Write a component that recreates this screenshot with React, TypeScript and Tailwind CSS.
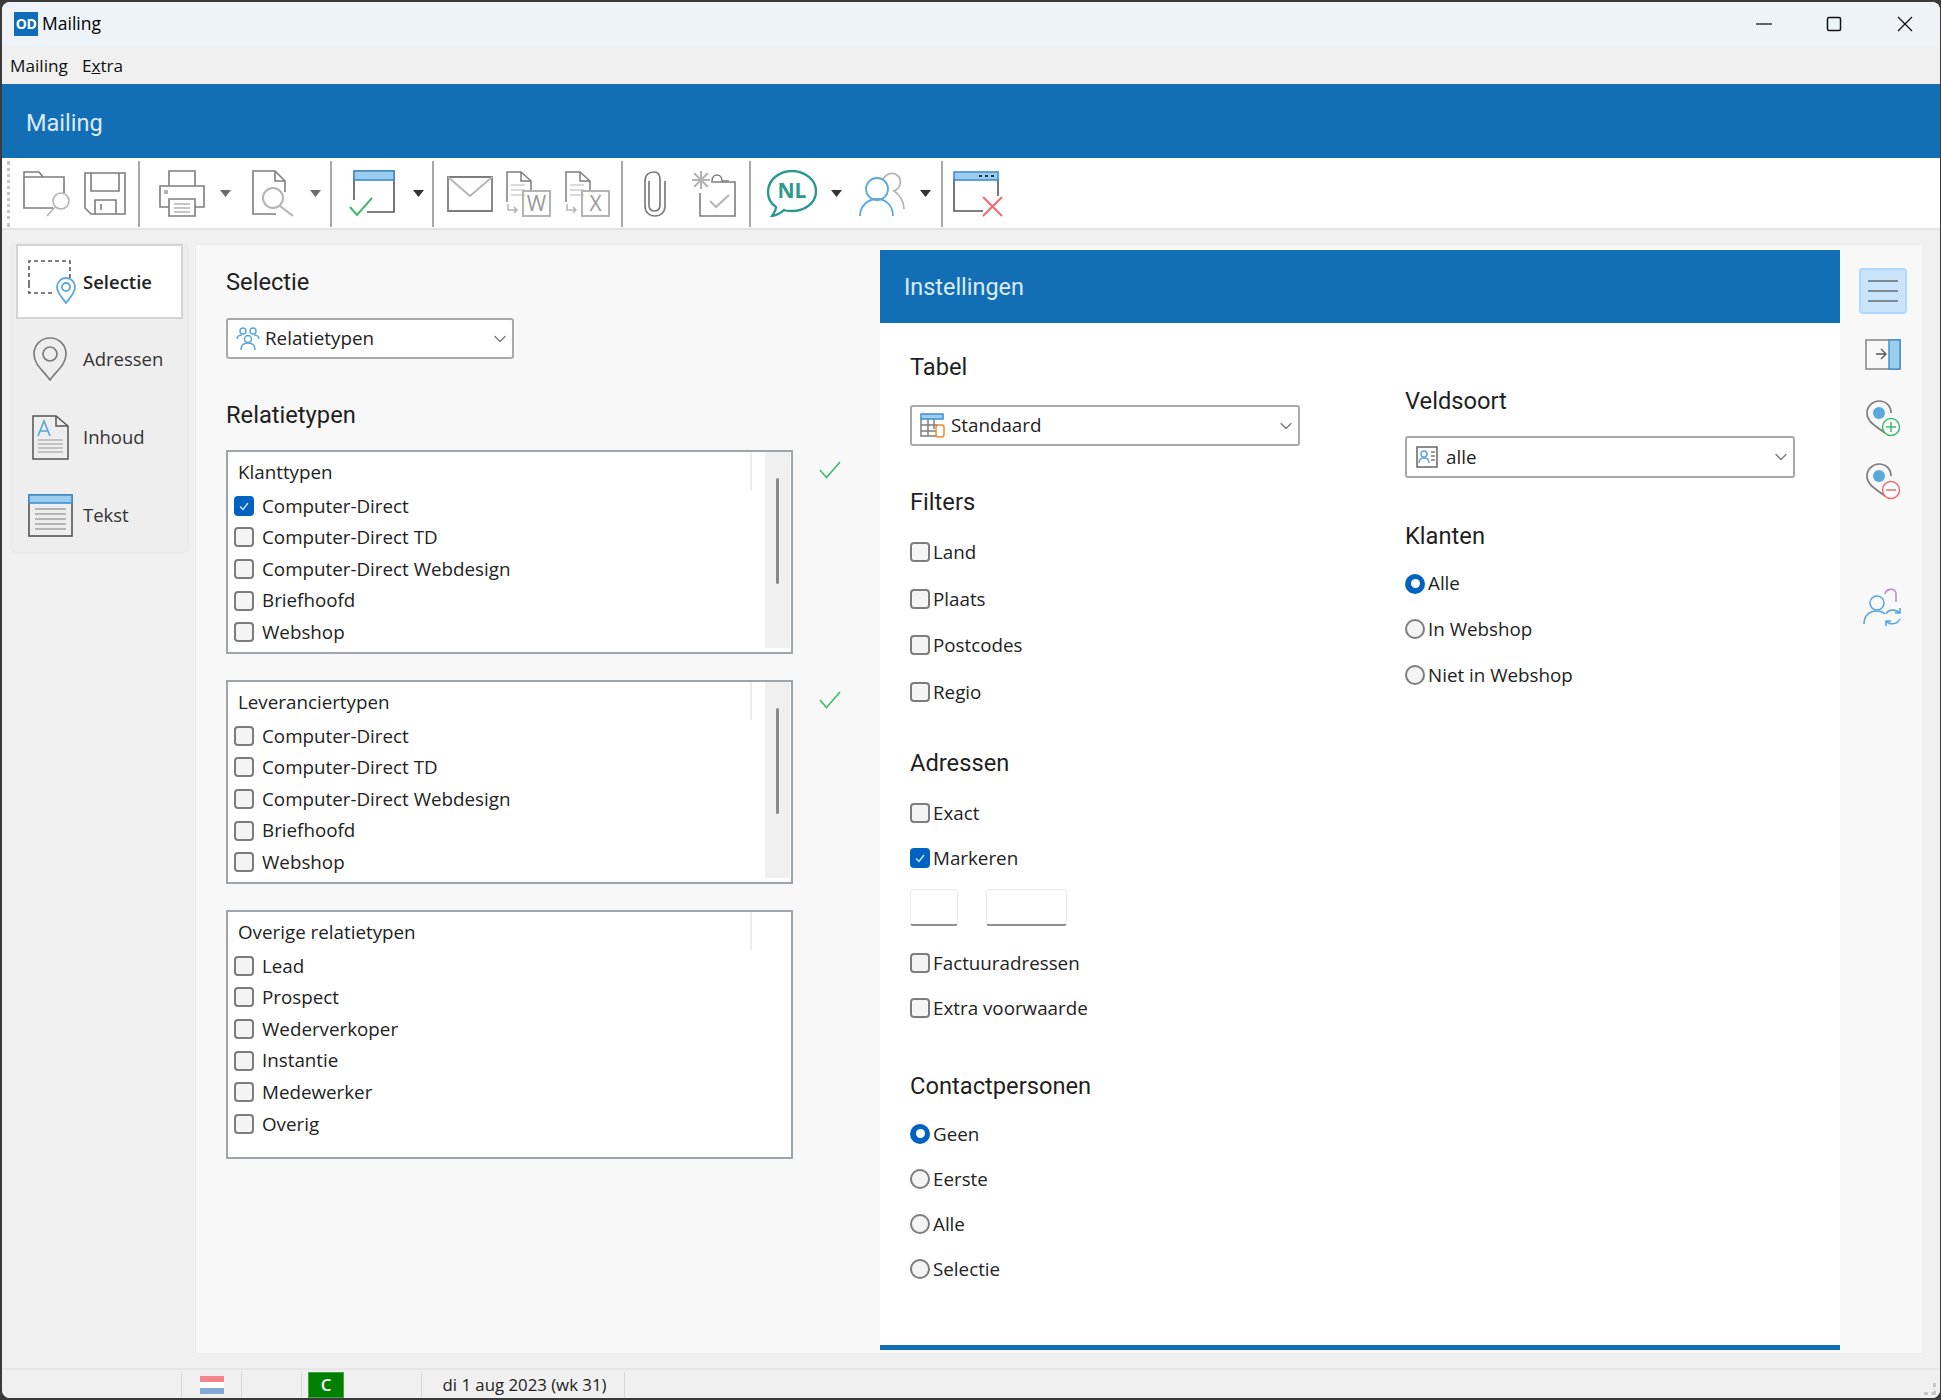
import { ChevronDown } from "lucide-react"

const GRAY = "#7d7d7d"
const LIGHT = "#b4b4b4"
const BLUE = "#5ba8dc"
const SKY = "#9ccdee"
const GREEN = "#3dbb6c"
const RED = "#f2686e"

function Heading({ children }: { children: string }) {
  return <div className="h-[30px] pt-[2px] flex items-center font-['Roboto',sans-serif] text-[23.7px] text-[#1f1f1f]">{children}</div>
}

function Dropdown({ icon, label, className }: { icon: React.ReactNode; label: string; className: string }) {
  return (
    <div className={`flex items-center bg-white border-2 border-[#a9a9a9] rounded-[3px] pl-2 pr-[2px] ${className}`}>
      {icon}
      <span className="ml-[5px] flex-1 text-[#222]">{label}</span>
      <ChevronDown className="w-[20px] h-[20px] text-[#777]" strokeWidth={1.5} />
    </div>
  )
}

function Check({ on, label }: { on?: boolean; label: string }) {
  return (
    <div className="flex items-center h-full">
      {on ? (
        <span className="w-[20px] h-[20px] rounded-[4px] bg-[#0063c1] flex items-center justify-center">
          <svg width="12" height="12" viewBox="0 0 12 12"><path d="M2 6.5 5 9.5 10 3" fill="none" stroke="#cfe3f5" strokeWidth="1.4" /></svg>
        </span>
      ) : (
        <span className="w-[20px] h-[20px] rounded-[4px] bg-[#f4f4f4] border-2 border-[#7c7c7c]" />
      )}
      <span className="ml-[3px] text-[#222]">{label}</span>
    </div>
  )
}

function Radio({ on, label }: { on?: boolean; label: string }) {
  return (
    <div className="flex items-center h-[45px]">
      {on ? (
        <span className="w-[20px] h-[20px] rounded-full bg-[#0063c1] flex items-center justify-center">
          <span className="w-[9px] h-[9px] rounded-full bg-white" />
        </span>
      ) : (
        <span className="w-[20px] h-[20px] rounded-full bg-[#f4f4f4] border-2 border-[#7c7c7c]" />
      )}
      <span className="ml-[3px] text-[#222]">{label}</span>
    </div>
  )
}

function ListBox({ title, items, checked, thumb, className }: { title: string; items: string[]; checked?: string; thumb?: string; className: string }) {
  return (
    <div className={`flex w-[567px] bg-white border-2 border-[#9ea4aa] ${className}`}>
      <div className="w-[537px]">
        <div className="w-[524px] h-[38px] flex items-center pl-[10px] pt-[2px] border-r-2 border-[#eeeeee] text-[#222]">{title}</div>
        {items.map((item) => (
          <div key={item} className="h-[31.6px] pl-[6px] [&_span:last-child]:ml-[8px]">
            <Check label={item} on={item === checked} />
          </div>
        ))}
      </div>
      {thumb && (
        <div className="w-[25px] bg-[#f0f0f0] flex justify-center pt-[26px] mb-[4px]">
          <div className={`w-[3px] bg-[#8a8a8a] rounded-full ${thumb}`} />
        </div>
      )}
    </div>
  )
}

function Arrow({ dark, className }: { dark?: boolean; className: string }) {
  return (
    <svg width="11" height="7" viewBox="0 0 11 7" className={className}>
      <path d="M0 0H11L5.5 7Z" fill={dark ? "#333" : "#6b6b6b"} />
    </svg>
  )
}

function Sep({ className }: { className: string }) {
  return <div className={`w-[2px] h-[66px] bg-[#a8a8a8] ${className}`} />
}

function GreenCheck({ className }: { className: string }) {
  return (
    <svg width="22" height="18" viewBox="0 0 22 18" className={className}>
      <path d="M1 9 7.5 16.5 21 1" fill="none" stroke={GREEN} strokeWidth="1.6" />
    </svg>
  )
}

function DocBadge({ letter, className }: { letter: string; className: string }) {
  return (
    <svg width="46" height="46" viewBox="0 0 46 46" className={className} fill="none" stroke={GRAY} strokeWidth="1.5">
      <path d="M2 31V1H16L26 10V20" />
      <path d="M16 1V10H26" />
      <path d="M6 14H20M6 19H20M6 24H20" stroke="#d0d0d0" />
      <path d="M3 33V39H12M9 36 12 39 9 42" stroke={LIGHT} />
      <rect x="18" y="20" width="27" height="25" stroke={LIGHT} strokeWidth="2" />
      <text x="31.5" y="40" textAnchor="middle" fontSize="21" fill="#9a9a9a" stroke="none" fontFamily="Open Sans, sans-serif">{letter}</text>
    </svg>
  )
}

function Toolbar() {
  return (
    <div className="h-[72px] bg-white border-b-2 border-[#e3e3e3] flex items-center pl-[5px] pt-[1px] shrink-0">
      <div className="w-[3px] h-[66px] border-l-[3px] border-dotted border-[#c4c4c4]" />
      <svg width="48" height="47" viewBox="0 0 48 47" className="ml-[13px]" fill="none" stroke={GRAY} strokeWidth="1.6">
        <path d="M30 38H1V2H16L20 7H41V23" />
        <path d="M1 7H20" />
        <circle cx="38" cy="31" r="8" stroke={LIGHT} />
        <path d="M32 37 24 46" stroke={LIGHT} />
      </svg>
      <svg width="42" height="44" viewBox="0 0 42 44" className="ml-[13px]" fill="none" stroke={GRAY} strokeWidth="1.6">
        <path d="M1 1H41V42H7L1 36Z" />
        <path d="M7 1V19H35V1" />
        <path d="M11 42V28H32V42" />
        <path d="M17 32V38" />
      </svg>
      <Sep className="ml-[12px]" />
      <svg width="46" height="47" viewBox="0 0 46 47" className="ml-[19px]" fill="none" stroke={GRAY} strokeWidth="1.6">
        <path d="M10 16V1H36V16" />
        <path d="M10 37H1V16H45V37H36" />
        <path d="M10 29H36V46H10Z" />
        <path d="M15 34H31M15 38H31M15 42H31" stroke={LIGHT} />
        <rect x="5" y="20" width="4" height="4" fill={LIGHT} stroke="none" />
      </svg>
      <Arrow className="ml-[15px]" />
      <svg width="43" height="47" viewBox="0 0 43 47" className="ml-[21px]" fill="none" stroke={GRAY} strokeWidth="1.6">
        <path d="M24 44H1V1H23L33 11V22" />
        <path d="M23 1V11H33" />
        <circle cx="21" cy="28" r="10" stroke={LIGHT} strokeWidth="2" />
        <path d="M28 36 41 46" stroke={LIGHT} strokeWidth="2" />
      </svg>
      <Arrow className="ml-[15px]" />
      <Sep className="ml-[9px]" />
      <svg width="50" height="47" viewBox="0 0 50 47" className="ml-[17px]" fill="none">
        <path d="M5 1H45V42H18M5 30V1" stroke="#555" strokeWidth="1.6" />
        <rect x="5" y="1" width="40" height="9" fill={SKY} stroke="#3c8fcf" strokeWidth="1.6" />
        <path d="M1 37 8 45 23 28" stroke={GREEN} strokeWidth="2" />
      </svg>
      <Arrow dark className="ml-[14px]" />
      <Sep className="ml-[8px]" />
      <svg width="46" height="36" viewBox="0 0 46 36" className="ml-[13px]" fill="none" stroke={GRAY} strokeWidth="1.8">
        <path d="M1 1H45V35H1Z" />
        <path d="M1 1 23 20 45 1" stroke={LIGHT} />
      </svg>
      <DocBadge letter="W" className="ml-[12px]" />
      <DocBadge letter="X" className="ml-[13px]" />
      <Sep className="ml-[11px]" />
      <svg width="22" height="47" viewBox="0 0 22 47" className="ml-[21px]" fill="none" stroke={GRAY} strokeWidth="1.7">
        <path d="M5 11V35C5 39 7 41 10.5 41C14 41 16 39 16 35V9C16 5 14 2 10.5 2C5 2 1 5 1 11V36C1 42 5 46 11 46C17 46 21 42 21 36V11" />
      </svg>
      <svg width="46" height="49" viewBox="0 0 46 49" className="ml-[25px]" fill="none" stroke={GRAY} strokeWidth="1.6">
        <path d="M20 13H44V47H9V24" />
        <path d="M21 12C21 4 31 4 31 12H38" />
        <path d="M19 32 25 38 38 26" stroke={LIGHT} strokeWidth="2" />
        <path d="M10 2V20M1 11H19M3 4 17 18M17 4 3 18" stroke={LIGHT} strokeWidth="2" />
      </svg>
      <Sep className="ml-[12px]" />
      <svg width="50" height="47" viewBox="0 0 50 47" className="ml-[16px]" fill="none">
        <path d="M9 37C3 33 1 28 1 22C1 10 12 1 25 1C38 1 49 10 49 21C49 33 38 41 25 41C22 41 19 41 17 40C14 43 10 45 5 46C7 43 9 40 9 37Z" stroke="#2b9a8c" strokeWidth="2.4" />
        <text x="25" y="28" textAnchor="middle" fontSize="21" fontWeight="700" fill="#2b9a8c" fontFamily="Open Sans, sans-serif">NL</text>
      </svg>
      <Arrow dark className="ml-[14px]" />
      <svg width="46" height="46" viewBox="0 0 46 46" className="ml-[17px]" fill="none" strokeWidth="1.8">
        <path d="M24 9C26 3 34 0 39 5C43 9 42 17 35 20C40 23 45 30 45 38" stroke={LIGHT} />
        <circle cx="18" cy="18" r="11" stroke={BLUE} />
        <path d="M1 45C1 35 9 28 18 28C27 28 34 35 34 45" stroke={BLUE} />
      </svg>
      <Arrow dark className="ml-[15px]" />
      <Sep className="ml-[10px]" />
      <svg width="50" height="46" viewBox="0 0 50 46" className="ml-[10px]" fill="none">
        <path d="M1 8V40H30M45 8V25" stroke="#555" strokeWidth="1.6" />
        <rect x="1" y="1" width="44" height="8" fill={SKY} stroke="#3c8fcf" strokeWidth="1.6" />
        <path d="M26 5H29M32 5H35M38 5H41" stroke="#333" strokeWidth="2" />
        <path d="M30 26 49 45M49 26 30 45" stroke={RED} strokeWidth="2" />
      </svg>
    </div>
  )
}

function NavRail() {
  return (
    <div className="w-[175px] h-[308px] ml-[10px] bg-[#eeeeee] rounded-[4px] shadow-[0_0_2px_#d8d8d8] text-[18.5px]">
      <div className="mx-[4px] mb-[1px] h-[75px] bg-white border-2 border-[#d4d4d4] flex items-center pl-[10px]">
        <svg width="48" height="44" viewBox="0 0 48 44" fill="none">
          <path d="M1 24V1H42V20M1 24V33H27" stroke="#555" strokeWidth="1.6" strokeDasharray="4 3" />
          <path d="M38 43C33 36 29 33 29 27C29 22 33 18 38 18C43 18 47 22 47 27C47 33 43 36 38 43Z" stroke={BLUE} strokeWidth="1.8" fill="#fff" />
          <circle cx="38" cy="27" r="4" stroke={BLUE} strokeWidth="1.8" />
        </svg>
        <span className="ml-[7px] font-semibold text-[#222]">Selectie</span>
      </div>
      <div className="h-[78px] flex items-center">
        <svg width="34" height="44" viewBox="0 0 34 44" fill="none" stroke={GRAY} strokeWidth="1.7" className="ml-[21px]">
          <path d="M17 43C11 34 1 28 1 17C1 8 8 1 17 1C26 1 33 8 33 17C33 28 23 34 17 43Z" />
          <circle cx="17" cy="17" r="7" />
        </svg>
        <span className="ml-[16px] text-[#333]">Adressen</span>
      </div>
      <div className="h-[78px] flex items-center">
        <svg width="37" height="45" viewBox="0 0 37 45" fill="none" stroke="#555" strokeWidth="1.5" className="ml-[20px]">
          <path d="M1 1H24L36 11V44H1Z" />
          <path d="M24 1V11H36" />
          <path d="M6 21 12 6 18 21M8 16H16" stroke={BLUE} strokeWidth="1.7" />
          <path d="M6 25H31M6 29H31M6 33H31M6 37H31" stroke={LIGHT} />
        </svg>
        <span className="ml-[14px] text-[#333]">Inhoud</span>
      </div>
      <div className="h-[76px] flex items-center pt-[2px]">
        <svg width="45" height="43" viewBox="0 0 45 43" fill="none" className="ml-[16px]">
          <rect x="1" y="1" width="43" height="41" stroke="#555" strokeWidth="1.6" />
          <rect x="1" y="1" width="43" height="8" fill={SKY} stroke="#3c8fcf" strokeWidth="1.6" />
          <path d="M7 15H38M7 20H38M7 25H38M7 30H38M7 35H38" stroke={GRAY} />
        </svg>
        <span className="ml-[10px] text-[#333]">Tekst</span>
      </div>
    </div>
  )
}

function SelectionPane() {
  return (
    <div className="w-[684px] pl-[30px] pt-[22px] shrink-0">
      <Heading>Selectie</Heading>
      <Dropdown
        className="mt-[21px] w-[288px] h-[41px]"
        label="Relatietypen"
        icon={
          <svg width="24" height="25" viewBox="0 0 24 25" fill="none" stroke={BLUE} strokeWidth="1.5">
            <circle cx="7" cy="5" r="3" />
            <circle cx="17" cy="5" r="3" />
            <path d="M1 13C1 10 4 9 6 9M23 13C23 10 20 9 18 9" />
            <circle cx="12" cy="13" r="3.5" />
            <path d="M5 24C5 19 8 17 12 17C16 17 19 19 19 24" />
          </svg>
        }
      />
      <div className="mt-[41px]"><Heading>Relatietypen</Heading></div>
      <div className="flex mt-[20px]">
        <ListBox title="Klanttypen" items={["Computer-Direct", "Computer-Direct TD", "Computer-Direct Webdesign", "Briefhoofd", "Webshop"]} checked="Computer-Direct" thumb="h-[106px]" className="h-[204px]" />
        <GreenCheck className="ml-[26px] mt-[11px]" />
      </div>
      <div className="flex mt-[26px]">
        <ListBox title="Leveranciertypen" items={["Computer-Direct", "Computer-Direct TD", "Computer-Direct Webdesign", "Briefhoofd", "Webshop"]} thumb="h-[106px]" className="h-[204px]" />
        <GreenCheck className="ml-[26px] mt-[11px]" />
      </div>
      <div className="mt-[26px]">
        <ListBox title="Overige relatietypen" items={["Lead", "Prospect", "Wederverkoper", "Instantie", "Medewerker", "Overig"]} className="h-[249px]" />
      </div>
    </div>
  )
}

function SettingsPane() {
  return (
    <div className="w-[960px] shrink-0 mt-[5px] mb-[3px] bg-white border-b-[5px] border-[#126fb6] flex flex-col">
      <div className="h-[73px] bg-[#126fb6] flex items-center pl-[24px] pt-[3px] font-['Roboto',sans-serif] text-[23.4px] text-[#dcebf7]">Instellingen</div>
      <div className="flex flex-1">
        <div className="w-[525px] pl-[30px] pt-[29px]">
          <Heading>Tabel</Heading>
          <Dropdown
            className="mt-[23px] w-[390px] h-[41px]"
            label="Standaard"
            icon={
              <svg width="26" height="25" viewBox="0 0 26 25" fill="none" strokeWidth="1.5">
                <path d="M1 6V23H18M8 6V23M1 12H18M1 18H16M14 6V16" stroke={GRAY} />
                <rect x="1" y="1" width="22" height="5" fill={SKY} stroke="#3c8fcf" />
                <rect x="16" y="12" width="8" height="12" rx="2.5" fill="#fff" stroke="#f08a3c" />
              </svg>
            }
          />
          <div className="mt-[41px]"><Heading>Filters</Heading></div>
          <div className="mt-[12px]">
            {["Land", "Plaats", "Postcodes", "Regio"].map((label) => (
              <div key={label} className="h-[46.6px]"><Check label={label} /></div>
            ))}
          </div>
          <div className="mt-[32px]"><Heading>Adressen</Heading></div>
          <div className="mt-[13px] h-[45px]"><Check label="Exact" /></div>
          <div className="h-[45px]"><Check on label="Markeren" /></div>
          <div className="flex mt-[9px] gap-[28px]">
            <div className="w-[48px] h-[37px] bg-white border border-[#ececec] border-b-2 border-b-[#8f8f8f] rounded-[3px]" />
            <div className="w-[81px] h-[37px] bg-white border border-[#ececec] border-b-2 border-b-[#8f8f8f] rounded-[3px]" />
          </div>
          <div className="mt-[14px] h-[45px]"><Check label="Factuuradressen" /></div>
          <div className="h-[45px]"><Check label="Extra voorwaarde" /></div>
          <div className="mt-[40px]"><Heading>Contactpersonen</Heading></div>
          <div className="mt-[11px]">
            <Radio on label="Geen" />
            <Radio label="Eerste" />
            <Radio label="Alle" />
            <Radio label="Selectie" />
          </div>
        </div>
        <div className="pt-[63px]">
          <Heading>Veldsoort</Heading>
          <Dropdown
            className="mt-[20px] w-[390px] h-[42px]"
            label="alle"
            icon={
              <svg width="26" height="25" viewBox="0 0 26 25" fill="none" strokeWidth="1.5">
                <rect x="2" y="2" width="20" height="20" stroke="#666" />
                <circle cx="9" cy="9" r="3" stroke={BLUE} />
                <path d="M4 18C4 14 7 13 9 13C11 13 14 14 14 18" stroke={BLUE} />
                <path d="M16 7H20M16 11H20M16 15H20" stroke={GRAY} />
              </svg>
            }
          />
          <div className="mt-[43px]"><Heading>Klanten</Heading></div>
          <div className="mt-[10px] flex flex-col gap-[0.8px]">
            <Radio on label="Alle" />
            <Radio label="In Webshop" />
            <Radio label="Niet in Webshop" />
          </div>
        </div>
      </div>
    </div>
  )
}

function ToolRail() {
  return (
    <div className="flex-1 flex flex-col items-center pt-[23px] pl-[3px]">
      <div className="w-[48px] h-[46px] rounded-[4px] bg-[#cce4fb] border-2 border-[#aed8ff] flex flex-col items-center justify-center gap-[8px]">
        <div className="w-[30px] h-[2px] bg-[#7c8a96]" />
        <div className="w-[30px] h-[2px] bg-[#7c8a96]" />
        <div className="w-[30px] h-[2px] bg-[#7c8a96]" />
      </div>
      <svg width="36" height="31" viewBox="0 0 36 31" fill="none" className="mt-[25px]">
        <rect x="1" y="1" width="34" height="29" stroke="#8a8a8a" strokeWidth="1.6" />
        <rect x="24" y="1" width="11" height="29" fill={SKY} stroke="#3c8fcf" strokeWidth="1.4" />
        <path d="M11 15H20M16 10 21 15 16 20" stroke="#555" strokeWidth="1.3" />
      </svg>
      <svg width="36" height="37" viewBox="0 0 36 37" fill="none" className="mt-[30px]">
        <path d="M20 33C11 26 2 22 2 13C2 6 8 1 14 1C21 1 26 6 26 13" stroke={GRAY} strokeWidth="1.7" />
        <circle cx="14" cy="13" r="6" fill={BLUE} />
        <circle cx="26" cy="27" r="8.5" fill="#fff" stroke={GREEN} strokeWidth="1.5" />
        <path d="M21 27H31M26 22V32" stroke={GREEN} strokeWidth="1.5" />
      </svg>
      <svg width="36" height="37" viewBox="0 0 36 37" fill="none" className="mt-[26px]">
        <path d="M20 33C11 26 2 22 2 13C2 6 8 1 14 1C21 1 26 6 26 13" stroke={GRAY} strokeWidth="1.7" />
        <circle cx="14" cy="13" r="6" fill={BLUE} />
        <circle cx="26" cy="27" r="8.5" fill="#fff" stroke={RED} strokeWidth="1.5" />
        <path d="M21 27H31" stroke={RED} strokeWidth="1.5" />
      </svg>
      <svg width="40" height="41" viewBox="0 0 40 41" fill="none" className="mt-[86px]" strokeWidth="1.6">
        <path d="M22 8C23 3 31 1 33 7V16" stroke="#b98fc9" />
        <circle cx="14" cy="17" r="7" stroke={BLUE} />
        <path d="M1 38C1 29 7 25 14 25C18 25 20 26 22 28" stroke={BLUE} />
        <path d="M23 28C25 23 33 23 37 27M37 22V27H32" stroke={BLUE} />
        <path d="M37 33C34 39 26 39 23 35M23 40V35H28" stroke={BLUE} />
      </svg>
    </div>
  )
}

function StatusBar() {
  return (
    <div className="h-[30px] shrink-0 bg-[#f0f0f0] border-t-2 border-[#e6e6e6] flex items-end text-[16.8px] text-[#222]">
      <div className="w-[179px] h-[26px]" />
      <div className="w-[60px] h-[26px] border-l border-[#d8d8d8] flex items-center justify-center">
        <div className="w-[24px] h-[18px] flex flex-col">
          <div className="flex-1 bg-[#f4858d]" />
          <div className="flex-1 bg-white" />
          <div className="flex-1 bg-[#85a7d8]" />
        </div>
      </div>
      <div className="w-[60px] h-[26px] border-l border-[#d8d8d8]" />
      <div className="w-[120px] h-[26px] border-l border-[#d8d8d8] pl-[6px]">
        <div className="w-[36px] h-[26px] bg-[#008000] border border-[#49a049] flex items-center justify-center text-white font-semibold">C</div>
      </div>
      <div className="w-[204px] h-[26px] border-l border-r border-[#d8d8d8] flex items-center justify-center pl-[3px]">di 1 aug 2023 (wk 31)</div>
      <div className="flex-1" />
      <div className="w-[12px] h-[12px] mr-[4px] mb-[3px] border-r-[3px] border-b-[3px] border-dotted border-[#c8c8c8]" />
    </div>
  )
}

export default function App() {
  return (
    <div className="w-[1941px] h-[1400px] bg-[#3a3a3a] pl-[2px] pr-[1px] pt-[2px] pb-[2px] font-['Open_Sans','Noto_Sans',sans-serif] text-[18.8px]">
      <div className="w-full h-full rounded-[8px] overflow-hidden flex flex-col bg-[#f0f0f0]">
        <div className="h-[45px] shrink-0 bg-[#eef3f8] flex items-center pl-[12px] pb-[2px]">
          <div className="w-[24px] h-[24px] bg-[#0f6cb8] flex items-center justify-center text-white text-[14px] font-bold tracking-[-0.5px]">OD</div>
          <span className="ml-[4px] text-[17.5px] text-black">Mailing</span>
          <div className="flex-1" />
          <svg width="18" height="18" viewBox="0 0 18 18" fill="none" stroke="#333" strokeWidth="1.3"><path d="M1 9H17" /></svg>
          <svg width="16" height="16" viewBox="0 0 16 16" fill="none" stroke="#111" strokeWidth="1.5" className="ml-[53px]"><rect x="1.5" y="1.5" width="13" height="13" rx="1.5" /></svg>
          <svg width="18" height="18" viewBox="0 0 18 18" fill="none" stroke="#111" strokeWidth="1.3" className="ml-[54px] mr-[26px]"><path d="M2 2 16 16M16 2 2 16" /></svg>
        </div>
        <div className="h-[37px] shrink-0 bg-[#f0f0f0] flex items-center pl-[8px] gap-[14px] text-[17.2px] text-[#111]">
          <span>Mailing</span>
          <span>E<span className="underline">x</span>tra</span>
        </div>
        <div className="h-[74px] shrink-0 bg-[#126fb6] flex items-center pl-[24px] pt-[5px] text-[23.5px] text-[#dcebf7] font-['Roboto',sans-serif]">Mailing</div>
        <Toolbar />
        <div className="flex-1 flex pt-[14px] min-h-0">
          <NavRail />
          <div className="ml-[8px] mb-[14px] w-[1728px] bg-[#f8f8f8] border border-[#ececec] flex">
            <SelectionPane />
            <SettingsPane />
            <ToolRail />
          </div>
        </div>
        <StatusBar />
      </div>
    </div>
  )
}
